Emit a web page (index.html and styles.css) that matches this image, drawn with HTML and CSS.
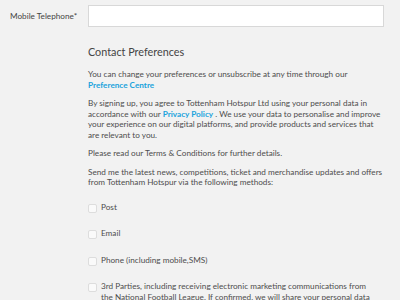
FILE: index.html
```html
<!DOCTYPE html>
<html lang="en">
<head>
  <meta charset="UTF-8" />
  <title>Contact Preferences</title>
  <link rel="stylesheet" href="styles.css">
</head>
<body>

  <div class="field-row">
    <label for="mobile">Mobile Telephone*</label>
    <input type="text" id="mobile">
  </div>

  <div class="prefs">
    <h2>Contact Preferences</h2>

    <p>You can change your preferences or unsubscribe at any time through our <a href="#">Preference Centre</a></p>

    <p>By signing up, you agree to Tottenham Hotspur Ltd using your personal data in accordance with our <a href="#">Privacy Policy</a> . We use your data to personalise and improve your experience on our digital platforms, and provide products and services that are relevant to you.</p>

    <p>Please read our Terms &amp; Conditions for further details.</p>

    <p>Send me the latest news, competitions, ticket and merchandise updates and offers from Tottenham Hotspur via the following methods:</p>

    <div class="options">
      <div class="option">
        <input type="checkbox" id="post">
        <label for="post">Post</label>
      </div>
      <div class="option">
        <input type="checkbox" id="email">
        <label for="email">Email</label>
      </div>
      <div class="option">
        <input type="checkbox" id="phone">
        <label for="phone">Phone (including mobile,SMS)</label>
      </div>
      <div class="option">
        <input type="checkbox" id="third">
        <label for="third">3rd Parties, including receiving electronic marketing communications from the National Football League. If confirmed, we will share your personal data with the National Football League.</label>
      </div>
    </div>
  </div>

</body>
</html>
```

FILE: styles.css
```css
body {
  margin: 0;
  padding: 5px 16px 0 10px;
  background-color: #f2f2f2;
  color: #4d4d4d;
  font-family: Lato, "Open Sans", sans-serif;
  font-size: 8.2px;
  line-height: 10.5px;
}

.field-row {
  display: flex;
  align-items: center;
}

.field-row label {
  width: 78px;
  color: #444;
}

.field-row input {
  flex: 1;
  height: 22px;
  box-sizing: border-box;
  border: 1px solid #d8d8d8;
  background-color: #fff;
  margin: 0;
}

.prefs {
  margin-left: 78px;
  padding-top: 17px;
}

h2 {
  margin: 0 0 9px;
  font-size: 10.8px;
  font-weight: normal;
  line-height: 16px;
  color: #444;
}

p {
  margin: 0 0 8px;
}

a {
  color: #1aa3dc;
  text-decoration: none;
  font-weight: bold;
}

.options {
  display: flex;
  flex-direction: column;
  gap: 15.5px;
  margin-top: 14px;
}

.option {
  display: flex;
  align-items: flex-start;
  gap: 4px;
  padding-right: 8px;
}

.option input {
  appearance: none;
  width: 9px;
  height: 9px;
  margin: 2px 0 0 0;
  border: 1px solid #ddd;
  border-radius: 2px;
  background-color: #fafafa;
  flex-shrink: 0;
}
```
